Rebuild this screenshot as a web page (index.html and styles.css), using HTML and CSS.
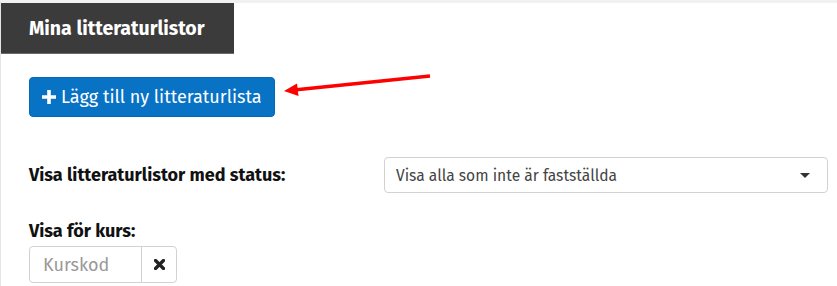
FILE: index.html
```html
<!DOCTYPE html>
<html lang="sv">
<head>
<meta charset="utf-8">
<link rel="stylesheet" href="styles.css">
</head>
<body>
<div class="page">
  <div class="tab">Mina litteraturlistor</div>
  <div class="content">
    <div class="btn-row">
      <button class="btn-primary"><svg class="plus" viewBox="0 0 14 14" width="14" height="14"><path d="M5.2 0h3.6v5.2H14v3.6H8.8V14H5.2V8.8H0V5.2h5.2z" fill="#fff"/></svg><span>Lägg till ny litteraturlista</span></button>
    </div>
    <div class="status-row">
      <label class="lbl">Visa litteraturlistor med status:</label>
      <div class="select">
        <span>Visa alla som inte är fastställda</span>
        <span class="caret"></span>
      </div>
    </div>
    <div class="course">
      <label class="lbl">Visa för kurs:</label>
      <div class="input-group">
        <div class="input">Kurskod</div>
        <div class="clear"><svg viewBox="0 0 10 10" width="11" height="11"><path d="M1.4 1.4L8.6 8.6M8.6 1.4L1.4 8.6" stroke="#222" stroke-width="3" stroke-linecap="round"/></svg></div>
      </div>
    </div>
  </div>
  <svg class="arrow" width="837" height="286" viewBox="0 0 837 286">
    <line x1="430" y1="76" x2="294" y2="90" stroke="#f00" stroke-width="3.5"/>
    <polygon points="284,91 297,83.5 298.5,96" fill="#f00"/>
  </svg>
</div>
</body>
</html>
```
FILE: styles.css
```css
* { box-sizing: border-box; }
html, body { margin: 0; padding: 0; background: #fff; }
body {
  font-family: "Fira Sans", Roboto, "Noto Sans", sans-serif;
  color: #222;
  width: 837px;
  height: 286px;
  overflow: hidden;
}
.page {
  position: relative;
  border-top: 3px solid #f1f1f1;
  border-left: 1px solid #e4e4e4;
  height: 286px;
}
.tab {
  width: 233px;
  height: 51px;
  background: #3b3b3b;
  border-bottom: 1px solid #6a6a6a;
  color: #fff;
  font-weight: 700;
  font-size: 19.5px;
  padding-left: 28px;
  display: flex;
  align-items: center;
}
.content {
  padding: 23px 9px 0 28px;
}
.btn-row { height: 40px; }
.btn-primary {
  display: inline-flex;
  align-items: center;
  gap: 5px;
  height: 40px;
  padding: 0 12px 0 12px;
  background: #0872c4;
  border: 1px solid #0568b5;
  border-radius: 4px;
  color: #fff;
  font-family: inherit;
  font-size: 18px;
  white-space: nowrap;
}
.plus { flex: none; }
.status-row {
  display: grid;
  grid-template-columns: 355px 1fr;
  align-items: center;
  margin-top: 40px;
  height: 36px;
}
.lbl {
  font-weight: 700;
  font-size: 18px;
  color: #111;
}
.select {
  height: 36px;
  border: 1px solid #d2d2d2;
  border-radius: 4px;
  display: flex;
  align-items: center;
  justify-content: space-between;
  padding: 0 17px 0 11px;
  font-size: 15.6px;
  color: #444;
}
.caret {
  width: 0; height: 0;
  border-left: 5px solid transparent;
  border-right: 5px solid transparent;
  border-top: 5px solid #333;
}
.course { margin-top: 27px; }
.course .lbl { display: block; line-height: 23px; }
.input-group {
  margin-top: 3px;
  display: flex;
  width: 148px;
  height: 37px;
  border: 1px solid #d2d2d2;
  border-radius: 4px;
}
.input {
  width: 112px;
  border-right: 1px solid #d2d2d2;
  display: flex;
  align-items: center;
  padding-left: 13px;
  color: #999;
  font-size: 18px;
}
.clear {
  flex: 1;
  display: flex;
  align-items: center;
  justify-content: center;
}
.arrow {
  position: absolute;
  left: -1px;
  top: -3px;
  pointer-events: none;
}
```
